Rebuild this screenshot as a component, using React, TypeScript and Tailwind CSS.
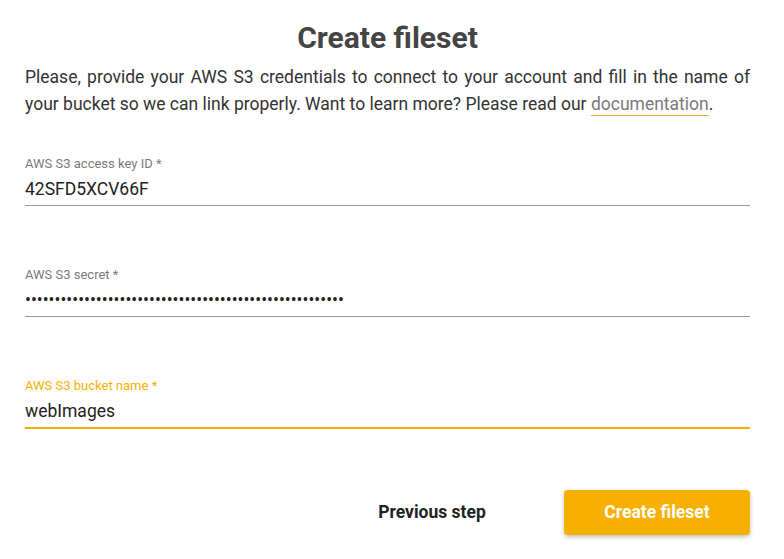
import React from "react";

function Field({ label, value, focused, password }: { label: string; value: string; focused?: boolean; password?: boolean }) {
  return (
    <div className="flex flex-col">
      <div className={"text-[13px] leading-[16px] " + (focused ? "text-[#f7b000]" : "text-[#7a7a7a]")}>{label}</div>
      <div
        className={
          "mt-[5px] text-[17.5px] leading-[24px] text-[#222] " +
          (focused ? "border-b-2 border-[#f7b000] h-[30px]" : "border-b border-[#9a9a9a] h-[29px]")
        }
      >
        {password ? (
          <input
            type="password"
            readOnly
            value={value}
            className="w-full bg-transparent outline-none text-[17.5px] leading-[24px] text-[#222] p-0"
            style={{ fontFamily: "Roboto, sans-serif" }}
          />
        ) : (
          <span>{value}</span>
        )}
      </div>
    </div>
  );
}

export default function App() {
  return (
    <div className="w-[784px] h-[559px] bg-white" style={{ fontFamily: "Roboto, 'Liberation Sans', sans-serif" }}>
      <div className="ml-[25px] w-[725px] flex flex-col">
        <h1 className="pt-[19px] text-center text-[30px] leading-[38px] font-bold text-[#444]">Create fileset</h1>
        <p className="mt-[7px] text-[17.5px] leading-[27px] text-[#333] text-justify">
          Please, provide your AWS S3 credentials to connect to your account and fill in the name of your bucket so we can link
          properly. Want to learn more? Please read our{" "}
          <span className="text-[#7a7a7a] border-b border-[#f0b429] pb-[1px]">documentation</span>.
        </p>
        <div className="mt-[38px] flex flex-col">
          <Field label="AWS S3 access key ID *" value="42SFD5XCV66F" />
          <div className="mt-[61px]">
            <Field label="AWS S3 secret *" value={"x".repeat(54)} password />
          </div>
          <div className="mt-[61px]">
            <Field label="AWS S3 bucket name *" value="webImages" focused />
          </div>
        </div>
        <div className="mt-[61px] flex items-center justify-end">
          <button className="w-[186px] h-[45px] text-[17.5px] font-bold text-[#222] mr-[39px]">Previous step</button>
          <button className="w-[186px] h-[45px] rounded-[4px] bg-[#f8b000] text-white text-[17.5px] font-bold shadow-[0_2px_4px_rgba(0,0,0,0.25)]">
            Create fileset
          </button>
        </div>
      </div>
    </div>
  );
}
